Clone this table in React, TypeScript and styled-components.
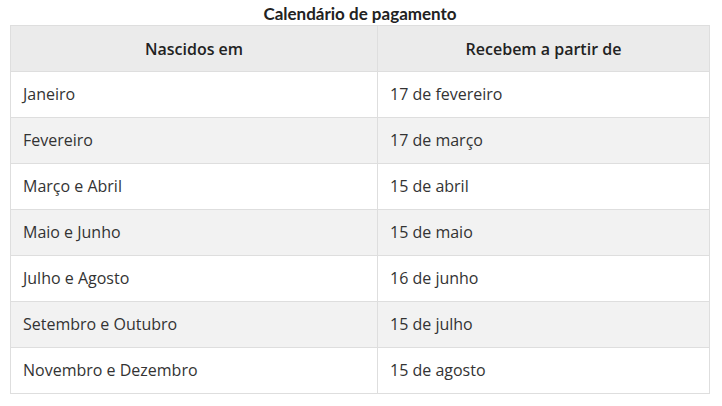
import React from 'react';
import styled, { createGlobalStyle } from 'styled-components';

const GlobalStyle = createGlobalStyle`
  body {
    margin: 0;
    background: #ffffff;
    font-family: "Open Sans", "Liberation Sans", sans-serif;
    color: #222;
  }
`;

const rows = [
  ['Janeiro', '17 de fevereiro'],
  ['Fevereiro', '17 de março'],
  ['Março e Abril', '15 de abril'],
  ['Maio e Junho', '15 de maio'],
  ['Julho e Agosto', '16 de junho'],
  ['Setembro e Outubro', '15 de julho'],
  ['Novembro e Dezembro', '15 de agosto'],
];

export default function App() {
  return (
    <>
      <GlobalStyle />
      <Wrapper>
        <Table>
          <Caption>Calendário de pagamento</Caption>
          <thead>
            <tr>
              <HeadCell>Nascidos em</HeadCell>
              <HeadCell>Recebem a partir de</HeadCell>
            </tr>
          </thead>
          <tbody>
            {rows.map(([born, pay], i) => (
              <Row key={born} $striped={i % 2 === 1}>
                <Cell>{born}</Cell>
                <Cell>{pay}</Cell>
              </Row>
            ))}
          </tbody>
        </Table>
      </Wrapper>
    </>
  );
}

const Wrapper = styled.div`
  padding: 0 12px 0 10px;
`;

const Table = styled.table`
  width: 700px;
  border-collapse: collapse;
  table-layout: fixed;
`;

const Caption = styled.caption`
  font-family: Lato, "Open Sans", sans-serif;
  font-weight: 700;
  font-size: 17px;
  height: 25px;
  line-height: 28px;
  color: #222;
`;

const HeadCell = styled.th`
  box-sizing: border-box;
  height: 46px;
  padding: 0;
  background: #ebebeb;
  border: 1px solid #dedede;
  font-size: 16px;
  font-weight: 600;
  color: #222;
  text-align: center;
  &:first-child {
    width: 367px;
  }
`;

const Row = styled.tr<{ $striped: boolean }>`
  background: ${(p) => (p.$striped ? '#f2f2f2' : '#ffffff')};
`;

const Cell = styled.td`
  box-sizing: border-box;
  height: 46px;
  padding: 0 12px 2px;
  border: 1px solid #dedede;
  font-size: 16px;
  color: #333;
`;
